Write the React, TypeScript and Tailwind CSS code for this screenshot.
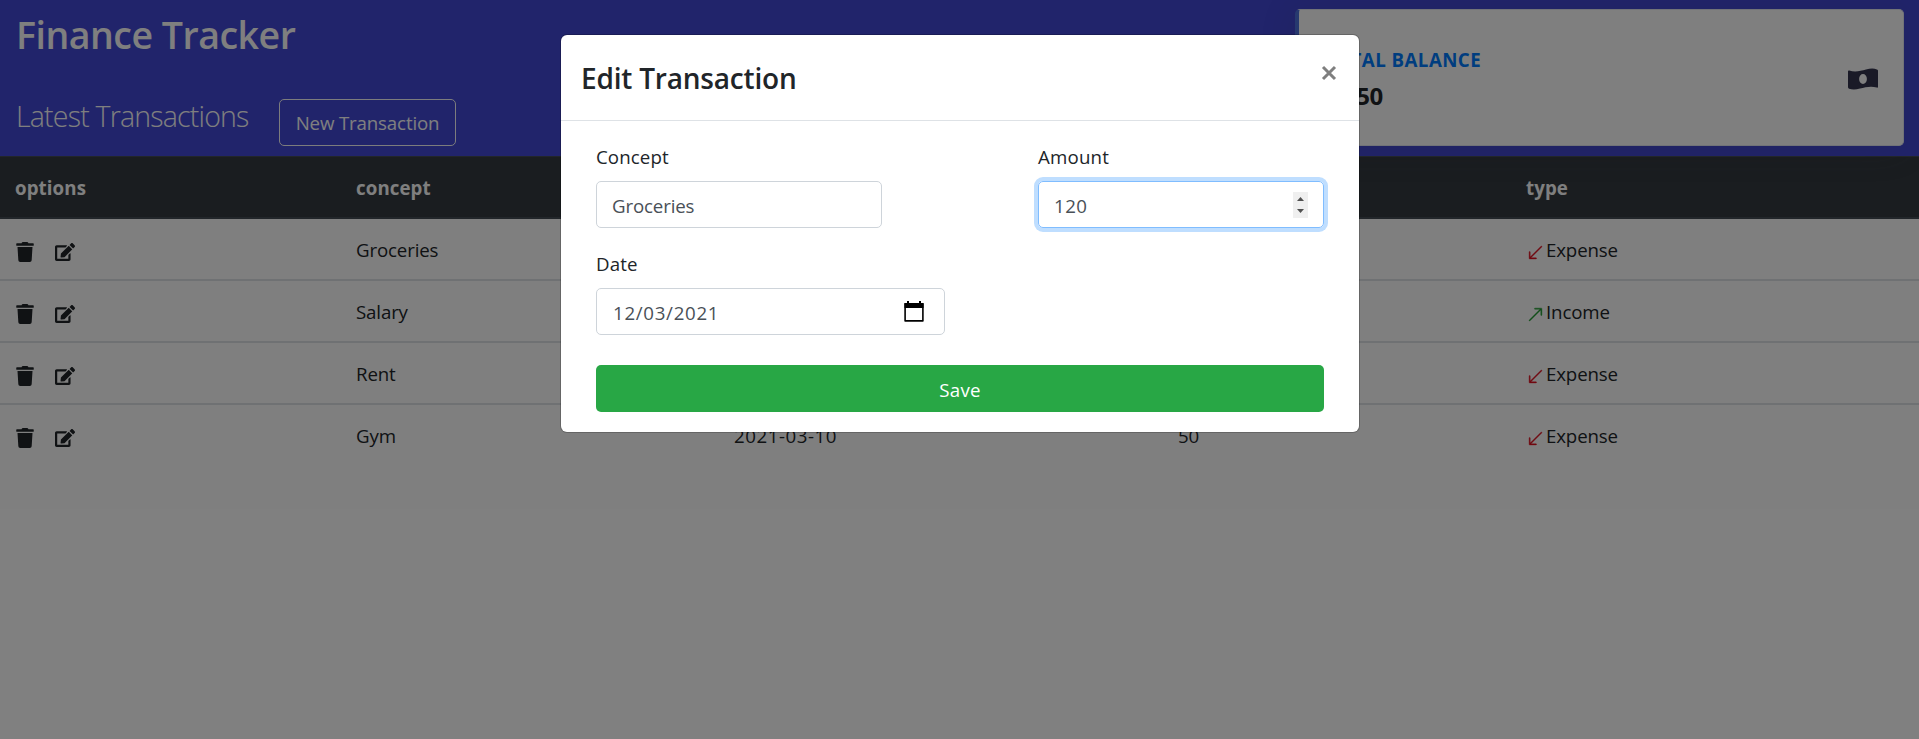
import React from "react";
import { FaTrash, FaEdit } from "react-icons/fa";
import { BsArrowDownLeft, BsArrowUpRight } from "react-icons/bs";

const rows = [
  { concept: "Groceries", date: "2021-03-12", amount: "120", income: false },
  { concept: "Salary", date: "2021-03-11", amount: "1000", income: true },
  { concept: "Rent", date: "2021-03-10", amount: "500", income: false },
  { concept: "Gym", date: "2021-03-10", amount: "50", income: false },
];

const GRID = "grid grid-cols-[341px_378px_444px_348px_1fr]";

function CalendarIcon() {
  return (
    <svg width="20" height="21" viewBox="0 0 20 21" fill="none">
      <path d="M1.1 2.7h17.8v17.2H1.1z" stroke="#000" strokeWidth="1.6" strokeLinejoin="round" />
      <path d="M0.5 2h19v5h-19zM3 0h2v3H3zM15 0h2v3h-2z" fill="#000" />
    </svg>
  );
}

function MoneyIcon() {
  return (
    <svg width="30" height="22" viewBox="0 0 30 22">
      <path
        fillRule="evenodd"
        fill="#34354e"
        d="M0 3.4Q0 2.2 1.2 2.5C7 4.4 12.500 3 18 1.500C22 .5 25.500.2 29 1.400Q30 1.800 30 2.800V18.700Q30 20 28.800 19.600C23 17.800 17.500 19.200 12 20.600C8 21.600 4.500 21.900 1 20.700Q0 20.300 0 19.300ZM15 6A3.900 5 0 1 0 15 16A3.900 5 0 1 0 15 6Z"
      />
    </svg>
  );
}

function Modal() {
  return (
    <div className="absolute left-[561px] top-[35px] h-[397px] w-[798px] rounded-[6px] bg-white shadow-[0_0_0_1px_rgba(0,0,0,0.2)] flex flex-col">
      <div className="flex h-[86px] justify-between border-b border-[#dee2e6] pl-5 pr-[22px]">
        <h4 className="pt-[22px] text-[28px] leading-[42px] font-semibold tracking-[-0.2px]">Edit Transaction</h4>
        <svg className="mt-[30px]" width="16" height="16" viewBox="0 0 16 16">
          <path d="M2 2l12 12M14 2L2 14" stroke="#7f7f7f" strokeWidth="3" />
        </svg>
      </div>
      <div className="flex flex-col px-[35px] pt-[20px]">
        <div className="flex justify-between">
          <label className="flex w-[286px] flex-col">
            <span className="h-[40px] leading-[31px] tracking-[0.1px]">Concept</span>
            <span className="flex h-[47px] items-center rounded-[5px] border border-[#ced4da] px-[15px] pt-[3px] text-[#495057]">Groceries</span>
          </label>
          <label className="flex w-[286px] flex-col">
            <span className="h-[40px] leading-[31px] tracking-[0.2px]">Amount</span>
            <span className="flex h-[47px] items-center justify-between rounded-[5px] border border-[#80bdff] px-[15px] text-[#495057] shadow-[0_0_0_4px_#bfdeff]">
              <span className="pt-[3px] tracking-[0.5px]">120</span>
              <svg width="15" height="26" viewBox="0 0 15 26">
                <path d="M0 0h15v26H0z" fill="#efefef" />
                <path d="M4 9l3.500-4L11 9zM4 17l3.500 4 3.500-4z" fill="#505050" />
              </svg>
            </span>
          </label>
        </div>
        <label className="mt-5 flex w-[349px] flex-col">
          <span className="h-[40px] leading-[31px] tracking-[0.1px]">Date</span>
          <span className="flex h-[47px] items-center justify-between rounded-[5px] border border-[#ced4da] pl-[16px] pr-5 text-[#495057]">
            <span className="pt-[3px] tracking-[0.7px]">12/03/2021</span>
            <CalendarIcon />
          </span>
        </label>
        <button className="mt-[30px] h-[47px] rounded-[5px] bg-[#28a745] pt-[4px] font-medium tracking-[0.2px] text-white">Save</button>
      </div>
    </div>
  );
}

export default function App() {
  return (
    <div className="relative h-[739px] w-full overflow-hidden bg-white font-['Open_Sans','Noto_Sans',sans-serif] text-[18.7px] tracking-[-0.15px] text-[#212529]">
      <header className="flex h-[156px] justify-between bg-[#4248d6] pr-[15px]">
        <div className="flex flex-col pl-4 text-white">
          <h1 className="h-[99px] pt-[11px] text-[37.5px] leading-[48px] font-semibold tracking-[-0.5px]">Finance Tracker</h1>
          <div className="flex">
            <h3 className="w-[263px] shrink-0 text-[28.5px] leading-[35px] font-light tracking-[-0.8px]">Latest Transactions</h3>
            <button className="h-[47px] w-[177px] rounded-[5px] border border-[#f8f9fa] pt-[2px]">New Transaction</button>
          </div>
        </div>
        <div className="mt-[9px] flex h-[137px] w-[609px] items-center justify-between rounded-[5px] border border-l-4 border-[#e3e6f0] border-l-[#4e73df] bg-white pl-[25px] pr-[25px] shadow-[0_3px_35px_0_rgba(58,59,69,0.15)]">
          <div className="flex flex-col gap-[3px] pt-[5px]">
            <span className="font-bold tracking-[0.45px] text-[#007bff]">TOTAL BALANCE</span>
            <span className="text-[24px] leading-[36px] font-bold tracking-[-0.5px]">$ 350</span>
          </div>
          <div className="pt-[3px]"><MoneyIcon /></div>
        </div>
      </header>
      <div className={GRID + " h-[63px] items-center border-t border-b-2 border-[#454d55] bg-[#343a40] pl-[15px] pt-[2px] font-bold tracking-[0.1px] text-white"}>
        <span>options</span><span>concept</span><span>date</span><span>amount</span><span>type</span>
      </div>
      {rows.map((r, i) => (
        <div key={i} className={GRID + (i < 3 ? " border-[#dee2e6]" : " border-transparent") + " h-[62px] items-center border-b-2 pl-[15px] pt-[2px]"}>
          <span className="flex items-center gap-5 pt-1"><FaTrash className="text-[20px]" /><FaEdit className="text-[20px]" /></span>
          <span>{r.concept}</span><span className="tracking-[0.55px]">{r.date}</span><span>{r.amount}</span>
          <span className="flex items-center">
            {r.income ? <BsArrowUpRight className="mt-[5px] mr-[2px] ml-px text-[17px] text-[#1e9a2e]" strokeWidth={0.4} /> : <BsArrowDownLeft className="mt-[5px] mr-[2px] ml-px text-[17px] text-[#e01020]" strokeWidth={0.4} />}
            {r.income ? "Income" : "Expense"}
          </span>
        </div>
      ))}
      <div className="absolute inset-0 bg-black/50" />
      <Modal />
    </div>
  );
}
